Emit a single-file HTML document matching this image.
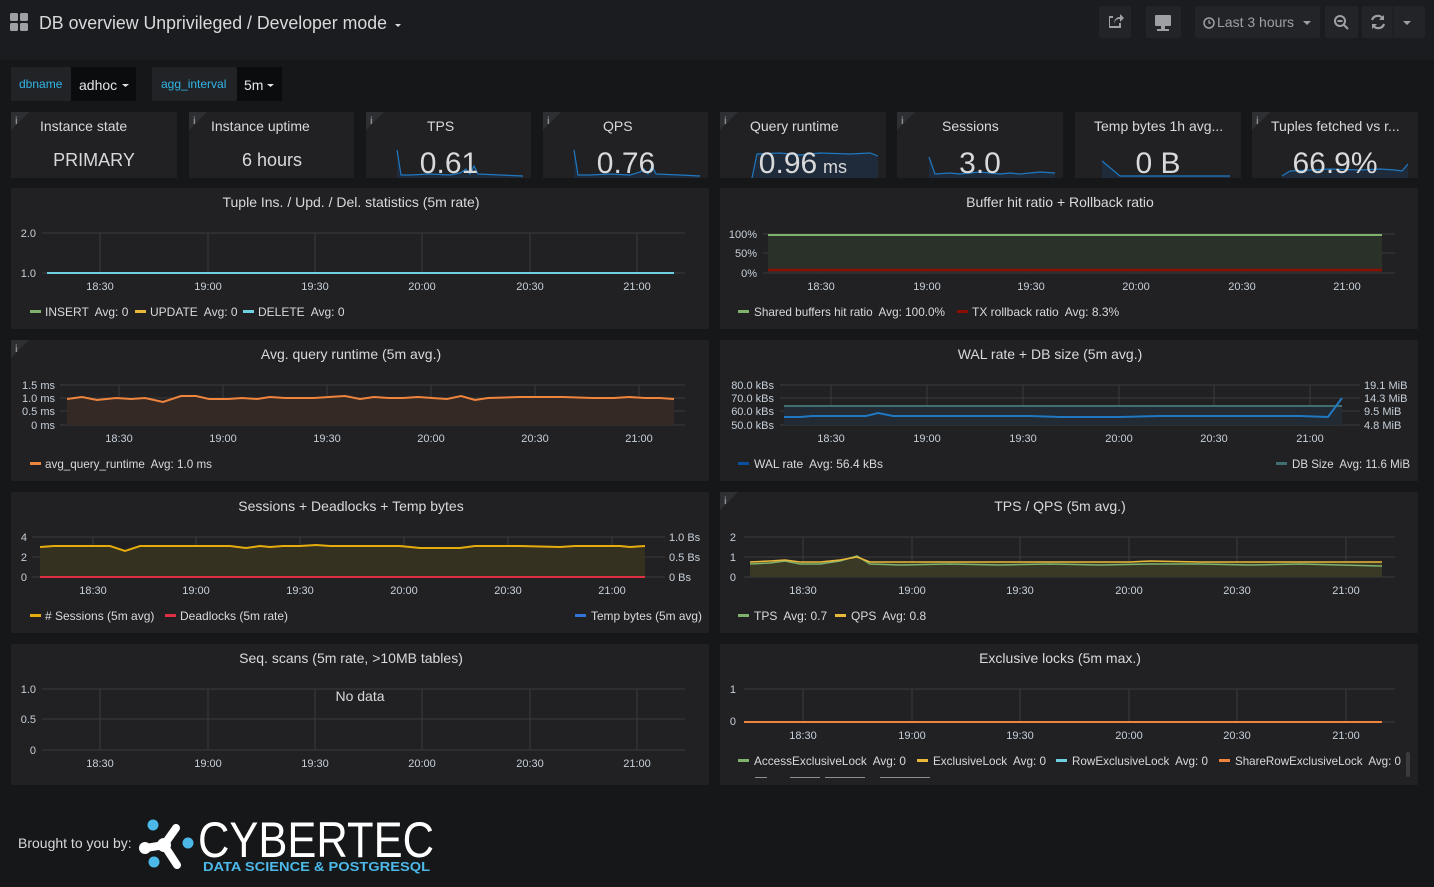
<!DOCTYPE html>
<html><head><meta charset="utf-8"><style>
html,body{margin:0;padding:0;background:#161719;width:1434px;height:887px;overflow:hidden;font-family:"Liberation Sans",sans-serif}
svg text{font-family:"Liberation Sans",sans-serif;white-space:pre}
</style></head><body>
<svg width="1434" height="887" viewBox="0 0 1434 887" xmlns="http://www.w3.org/2000/svg" xml:space="preserve">
<rect width="1434" height="887" fill="#161719"/>
<rect width="1434" height="60" fill="#1b1c1f"/>
<!-- header -->
<g fill="#9fa0a3"><rect x="10" y="13" width="8" height="8" rx="1.5"/><rect x="20" y="13" width="8" height="8" rx="1.5"/><rect x="10" y="23" width="8" height="8" rx="1.5"/><rect x="20" y="23" width="8" height="8" rx="1.5"/></g>
<text x="39" y="29" font-size="18" fill="#d8d9da" textLength="348" lengthAdjust="spacingAndGlyphs">DB overview Unprivileged / Developer mode</text>
<path d="M395 24h6l-3 3z" fill="#d8d9da"/>
<g fill="#232427"><rect x="1099" y="6" width="32" height="32" rx="2"/><rect x="1146" y="6" width="35" height="32" rx="2"/><rect x="1195" y="6" width="125" height="32" rx="2"/><rect x="1325" y="6" width="33" height="32" rx="2"/><rect x="1362" y="6" width="63" height="32" rx="2"/></g>
<line x1="1393" y1="6" x2="1393" y2="38" stroke="#1b1c1f"/>
<path d="M1109 16h4v2h-3v8h9v-3h2v5h-12z M1114 24c0-5 3-7 6-7v-3l4 4-4 4v-3c-3 0-5 1-6 5z" fill="#9fa0a3"/>
<rect x="1155" y="15" width="16" height="11" rx="1" fill="#9fa0a3"/><rect x="1161" y="26" width="4" height="3" fill="#9fa0a3"/><rect x="1157" y="29" width="12" height="2" fill="#9fa0a3"/>
<circle cx="1209" cy="23" r="5" fill="none" stroke="#9fa0a3" stroke-width="1.5"/><path d="M1209 20v3h2" stroke="#9fa0a3" stroke-width="1.3" fill="none"/>
<text x="1217" y="27" font-size="14" fill="#9fa0a3">Last 3 hours</text>
<path d="M1303 21h8l-4 4z" fill="#9fa0a3"/>
<circle cx="1340" cy="21" r="5" fill="none" stroke="#9fa0a3" stroke-width="2"/><path d="M1344 25l4 4M1337.5 21h5" stroke="#9fa0a3" stroke-width="2"/>
<path d="M1372 20a6 6 0 0 1 11-1M1384 24a6 6 0 0 1-11 1" stroke="#9fa0a3" stroke-width="2.2" fill="none"/><path d="M1384 15v5h-5zM1372 29v-5h5z" fill="#9fa0a3"/>
<path d="M1403 21h8l-4 4z" fill="#9fa0a3"/>
<!-- variables -->
<rect x="11" y="67" width="60" height="34" rx="2" fill="#212327"/><rect x="71" y="67" width="65" height="34" fill="#0b0c0e"/>
<text x="19" y="88" font-size="12" fill="#33b5e5">dbname</text><text x="79" y="90" font-size="14" fill="#e5e5e5">adhoc</text><path d="M122 84h7l-3.5 3z" fill="#e5e5e5"/>
<rect x="152" y="67" width="85" height="34" rx="2" fill="#212327"/><rect x="237" y="67" width="45" height="34" fill="#0b0c0e"/>
<text x="161" y="88" font-size="12" fill="#33b5e5">agg_interval</text><text x="244" y="90" font-size="14" fill="#e5e5e5">5m</text><path d="M267 84h7l-3.5 3z" fill="#e5e5e5"/>
<!-- stat panels -->
<g fill="#212124">
<rect x="11" y="112" width="166" height="66"/><rect x="189" y="112" width="165" height="66"/><rect x="366" y="112" width="165" height="66"/><rect x="543" y="112" width="165" height="66"/><rect x="720" y="112" width="166" height="66"/><rect x="897" y="112" width="166" height="66"/><rect x="1075" y="112" width="166" height="66"/><rect x="1252" y="112" width="166" height="66"/>
</g>
<g fill="#2e2f33">
<path d="M11 112h18l-18 18z"/><path d="M189 112h18l-18 18z"/><path d="M366 112h18l-18 18z"/><path d="M543 112h18l-18 18z"/><path d="M720 112h18l-18 18z"/><path d="M897 112h18l-18 18z"/><path d="M1252 112h18l-18 18z"/>
</g>
<g font-size="10" fill="#8e8e8e" font-family="Liberation Serif" font-weight="bold"><text x="15" y="124">i</text><text x="193" y="124">i</text><text x="370" y="124">i</text><text x="547" y="124">i</text><text x="724" y="124">i</text><text x="901" y="124">i</text><text x="1256" y="124">i</text></g>
<g font-size="14" fill="#d8d9da">
<text x="40" y="131">Instance state</text><text x="211" y="131">Instance uptime</text><text x="427" y="131">TPS</text><text x="603" y="131">QPS</text><text x="750" y="131">Query runtime</text><text x="942" y="131">Sessions</text><text x="1094" y="131">Temp bytes 1h avg...</text><text x="1271" y="131">Tuples fetched vs r...</text>
</g>
<!-- sparklines -->
<g fill="#1f2b3a" stroke="none">
<path d="M397 150L401 175L410 175L430 174L450 175L460 173L466 169L470 174L474 166L478 174L500 175L523 176V178H397Z"/>
<path d="M574 150L578 175L590 175L610 174L630 175L640 172L644 169L648 174L652 166L656 174L680 175L700 176V178H574Z"/>
<path d="M752 178L757 154L780 153L800 155L820 153L850 154L870 153L878 156V178H752Z"/>
<path d="M929 157L935 174L950 173L960 174L980 172L1000 174L1010 173L1020 174L1040 172L1055 173V178H929Z"/>
<path d="M1102 161L1120 176L1230 176V178H1102Z"/>
<path d="M1282 176L1290 171L1310 170L1330 169L1360 170L1380 169L1395 170L1402 171L1408 164V178H1282Z"/>
</g>
<g fill="none" stroke="#1f78c1" stroke-width="1.2">
<path d="M397 150L401 175L410 175L430 174L450 175L460 173L466 169L470 174L474 166L478 174L500 175L523 176"/>
<path d="M574 150L578 175L590 175L610 174L630 175L640 172L644 169L648 174L652 166L656 174L680 175L700 176"/>
<path d="M752 178L757 154L780 153L800 155L820 153L850 154L870 153L878 156"/>
<path d="M929 157L935 174L950 173L960 174L980 172L1000 174L1010 173L1020 174L1040 172L1055 173"/>
<path d="M1102 161L1120 176L1230 176"/>
<path d="M1282 176L1290 171L1310 170L1330 169L1360 170L1380 169L1395 170L1402 171L1408 164"/>
</g>
<g fill="#d8d9da" text-anchor="middle">
<text x="94" y="166" font-size="18">PRIMARY</text><text x="272" y="166" font-size="18">6 hours</text>
<text x="449" y="173" font-size="30">0.61</text><text x="626" y="173" font-size="30">0.76</text>
<text x="788" y="173" font-size="30">0.96</text><text x="835" y="173" font-size="18">ms</text>
<text x="980" y="173" font-size="30">3.0</text><text x="1158" y="173" font-size="30">0 B</text><text x="1335" y="173" font-size="30">66.9%</text>
</g>
<!-- big panels -->
<g fill="#212124">
<rect x="11" y="188" width="698" height="141"/><rect x="720" y="188" width="698" height="141"/>
<rect x="11" y="340" width="698" height="141"/><rect x="720" y="340" width="698" height="141"/>
<rect x="11" y="492" width="698" height="141"/><rect x="720" y="492" width="698" height="141"/>
<rect x="11" y="644" width="698" height="141"/><rect x="720" y="644" width="698" height="141"/>
</g>
<g fill="#2e2f33"><path d="M11 340h18l-18 18z"/><path d="M720 492h18l-18 18z"/></g>
<g font-size="10" fill="#8e8e8e" font-family="Liberation Serif" font-weight="bold"><text x="15" y="352">i</text><text x="724" y="504">i</text></g>
<g font-size="14" fill="#d8d9da" text-anchor="middle">
<text x="351" y="207">Tuple Ins. / Upd. / Del. statistics (5m rate)</text>
<text x="1060" y="207">Buffer hit ratio + Rollback ratio</text>
<text x="351" y="359">Avg. query runtime (5m avg.)</text>
<text x="1050" y="359">WAL rate + DB size (5m avg.)</text>
<text x="351" y="511">Sessions + Deadlocks + Temp bytes</text>
<text x="1060" y="511">TPS / QPS (5m avg.)</text>
<text x="351" y="663">Seq. scans (5m rate, &gt;10MB tables)</text>
<text x="1060" y="663">Exclusive locks (5m max.)</text>
</g>
<!-- grids -->
<g stroke="#3a3b3e" stroke-width="1">
<path d="M42 233H685M42 273H685M100 233V273M208 233V273M315 233V273M422 233V273M530 233V273M637 233V273"/>
<path d="M763 234H1395M763 253H1395M763 273H1395M821 234V273M927 234V273M1031 234V273M1136 234V273M1242 234V273M1347 234V273"/>
<path d="M60 385H685M60 398H685M60 411H685M60 425H685M119 385V425M223 385V425M327 385V425M431 385V425M535 385V425M639 385V425"/>
<path d="M780 385H1360M780 398H1360M780 411H1360M780 425H1360M831 385V425M927 385V425M1023 385V425M1119 385V425M1214 385V425M1310 385V425"/>
<path d="M32 537H665M32 557H665M32 577H665M93 537V577M196 537V577M300 537V577M404 537V577M508 537V577M612 537V577"/>
<path d="M744 537H1395M744 557H1395M744 577H1395M803 537V577M912 537V577M1020 537V577M1129 537V577M1237 537V577M1346 537V577"/>
<path d="M42 689H685M42 719H685M42 750H685M100 689V750M208 689V750M315 689V750M422 689V750M530 689V750M637 689V750"/>
<path d="M744 689H1395M744 722H1395M803 689V722M912 689V722M1020 689V722M1129 689V722M1237 689V722M1346 689V722"/>
</g>
<!-- series -->
<line x1="47" y1="273" x2="674" y2="273" stroke="#6ed0e0" stroke-width="2"/>
<rect x="768" y="235" width="614" height="37" fill="#2a3129"/>
<line x1="768" y1="235" x2="1382" y2="235" stroke="#7eb26d" stroke-width="2"/>
<line x1="768" y1="270" x2="1382" y2="270" stroke="#890f02" stroke-width="2.5"/>
<path d="M67 399L82 397L97 400L116 398L131 399L145 398L163 402L181 396L196 396L209 399L228 399L242 398L257 399L270 397L285 398L314 398L329 397L345 396L360 399L374 397L389 398L403 398L418 397L432 398L447 399L461 396L475 400L488 398L520 397L548 397L563 397L592 398L614 398L629 397L645 398L660 398L674 399V425H67Z" fill="#342925"/>
<path d="M67 399L82 397L97 400L116 398L131 399L145 398L163 402L181 396L196 396L209 399L228 399L242 398L257 399L270 397L285 398L314 398L329 397L345 396L360 399L374 397L389 398L403 398L418 397L432 398L447 399L461 396L475 400L488 398L520 397L548 397L563 397L592 398L614 398L629 397L645 398L660 398L674 399" fill="none" stroke="#ef843c" stroke-width="2"/>
<rect x="784" y="406" width="558" height="19" fill="#222a33"/>
<line x1="784" y1="406" x2="1342" y2="406" stroke="#3f6f73" stroke-width="2"/>
<path d="M784 417L800 417L812 416L830 416L850 416L866 416L878 413L893 416L910 416L930 416L950 416L980 416L1000 416L1030 416L1060 417L1120 417L1160 416L1200 416L1250 416L1300 416L1328 417L1342 398" fill="none" stroke="#1f78c1" stroke-width="2"/>
<path d="M40 547L54 546L75 546L97 546L110 546L125 551L140 546L160 546L200 546L230 546L246 548L260 546L270 547L283 546L300 546L316 545L330 546L340 546L400 546L420 548L440 548L460 548L475 546L520 546L560 547L575 546L600 546L620 546L630 547L645 546V577H40Z" fill="#353120"/>
<path d="M40 547L54 546L75 546L97 546L110 546L125 551L140 546L160 546L200 546L230 546L246 548L260 546L270 547L283 546L300 546L316 545L330 546L340 546L400 546L420 548L440 548L460 548L475 546L520 546L560 547L575 546L600 546L620 546L630 547L645 546" fill="none" stroke="#e5ac0e" stroke-width="2"/>
<line x1="40" y1="577" x2="645" y2="577" stroke="#e02f44" stroke-width="2"/>
<path d="M750 562L770 561L785 560L800 562L820 562L840 560L857 557L870 562L900 562L950 562L1000 562L1050 562L1100 562L1130 562L1150 561L1200 562L1250 562L1300 562L1382 562V577H750Z" fill="#3a3926"/>
<path d="M750 564L770 563L785 561L800 564L820 564L840 561L857 556L870 564L900 565L950 564L1000 565L1050 564L1100 565L1150 564L1200 564L1250 565L1300 564L1340 565L1382 566" fill="none" stroke="#7eb26d" stroke-width="1.5"/>
<path d="M750 562L770 561L785 560L800 562L820 562L840 560L857 557L870 562L900 562L950 562L1000 562L1050 562L1100 562L1130 562L1150 561L1200 562L1250 562L1300 562L1382 562" fill="none" stroke="#eab839" stroke-width="1.5"/>
<line x1="744" y1="722" x2="1382" y2="722" stroke="#ef843c" stroke-width="2"/>
<!-- axis labels -->
<g font-size="11" fill="#c7d0d9">
<g text-anchor="end">
<text x="36" y="237">2.0</text><text x="36" y="277">1.0</text>
<text x="757" y="238">100%</text><text x="757" y="257">50%</text><text x="757" y="277">0%</text>
<text x="55" y="389">1.5 ms</text><text x="55" y="402">1.0 ms</text><text x="55" y="415">0.5 ms</text><text x="55" y="429">0 ms</text>
<text x="774" y="389">80.0 kBs</text><text x="774" y="402">70.0 kBs</text><text x="774" y="415">60.0 kBs</text><text x="774" y="429">50.0 kBs</text>
<text x="27" y="541">4</text><text x="27" y="561">2</text><text x="27" y="581">0</text>
<text x="736" y="541">2</text><text x="736" y="561">1</text><text x="736" y="581">0</text>
<text x="36" y="693">1.0</text><text x="36" y="723">0.5</text><text x="36" y="754">0</text>
<text x="736" y="693">1</text><text x="736" y="725">0</text>
</g>
<text x="1364" y="389">19.1 MiB</text><text x="1364" y="402">14.3 MiB</text><text x="1364" y="415">9.5 MiB</text><text x="1364" y="429">4.8 MiB</text>
<text x="669" y="541">1.0 Bs</text><text x="669" y="561">0.5 Bs</text><text x="669" y="581">0 Bs</text>
<g text-anchor="middle">
<text x="100" y="290">18:30</text><text x="208" y="290">19:00</text><text x="315" y="290">19:30</text><text x="422" y="290">20:00</text><text x="530" y="290">20:30</text><text x="637" y="290">21:00</text>
<text x="821" y="290">18:30</text><text x="927" y="290">19:00</text><text x="1031" y="290">19:30</text><text x="1136" y="290">20:00</text><text x="1242" y="290">20:30</text><text x="1347" y="290">21:00</text>
<text x="119" y="442">18:30</text><text x="223" y="442">19:00</text><text x="327" y="442">19:30</text><text x="431" y="442">20:00</text><text x="535" y="442">20:30</text><text x="639" y="442">21:00</text>
<text x="831" y="442">18:30</text><text x="927" y="442">19:00</text><text x="1023" y="442">19:30</text><text x="1119" y="442">20:00</text><text x="1214" y="442">20:30</text><text x="1310" y="442">21:00</text>
<text x="93" y="594">18:30</text><text x="196" y="594">19:00</text><text x="300" y="594">19:30</text><text x="404" y="594">20:00</text><text x="508" y="594">20:30</text><text x="612" y="594">21:00</text>
<text x="803" y="594">18:30</text><text x="912" y="594">19:00</text><text x="1020" y="594">19:30</text><text x="1129" y="594">20:00</text><text x="1237" y="594">20:30</text><text x="1346" y="594">21:00</text>
<text x="100" y="767">18:30</text><text x="208" y="767">19:00</text><text x="315" y="767">19:30</text><text x="422" y="767">20:00</text><text x="530" y="767">20:30</text><text x="637" y="767">21:00</text>
<text x="803" y="739">18:30</text><text x="912" y="739">19:00</text><text x="1020" y="739">19:30</text><text x="1129" y="739">20:00</text><text x="1237" y="739">20:30</text><text x="1346" y="739">21:00</text>
</g>
</g>
<text x="360" y="701" font-size="14" fill="#d8d9da" text-anchor="middle">No data</text>
<!-- legends -->
<g font-size="12" fill="#d8d9da">
<rect x="30" y="310" width="11" height="3" fill="#7eb26d"/><text x="45" y="316">INSERT  Avg: 0</text>
<rect x="135" y="310" width="11" height="3" fill="#eab839"/><text x="150" y="316">UPDATE  Avg: 0</text>
<rect x="243" y="310" width="11" height="3" fill="#6ed0e0"/><text x="258" y="316">DELETE  Avg: 0</text>
<rect x="738" y="310" width="11" height="3" fill="#7eb26d"/><text x="754" y="316" textLength="191" lengthAdjust="spacingAndGlyphs">Shared buffers hit ratio  Avg: 100.0%</text>
<rect x="957" y="310" width="11" height="3" fill="#890f02"/><text x="972" y="316">TX rollback ratio  Avg: 8.3%</text>
<rect x="30" y="462" width="11" height="3" fill="#ef843c"/><text x="45" y="468" textLength="167" lengthAdjust="spacingAndGlyphs">avg_query_runtime  Avg: 1.0 ms</text>
<rect x="738" y="462" width="11" height="3" fill="#0a50a1"/><text x="754" y="468">WAL rate  Avg: 56.4 kBs</text>
<rect x="1276" y="462" width="11" height="3" fill="#3f6f73"/><text x="1292" y="468" textLength="118" lengthAdjust="spacingAndGlyphs">DB Size  Avg: 11.6 MiB</text>
<rect x="30" y="614" width="11" height="3" fill="#e5ac0e"/><text x="45" y="620"># Sessions (5m avg)</text>
<rect x="165" y="614" width="11" height="3" fill="#e02f44"/><text x="180" y="620">Deadlocks (5m rate)</text>
<rect x="575" y="614" width="11" height="3" fill="#3274d9"/><text x="591" y="620" textLength="111" lengthAdjust="spacingAndGlyphs">Temp bytes (5m avg)</text>
<rect x="738" y="614" width="11" height="3" fill="#7eb26d"/><text x="754" y="620">TPS  Avg: 0.7</text>
<rect x="835" y="614" width="11" height="3" fill="#eab839"/><text x="851" y="620">QPS  Avg: 0.8</text>
<rect x="738" y="759" width="11" height="3" fill="#7eb26d"/><text x="754" y="765" textLength="152" lengthAdjust="spacingAndGlyphs">AccessExclusiveLock  Avg: 0</text>
<rect x="917" y="759" width="11" height="3" fill="#eab839"/><text x="933" y="765" textLength="113" lengthAdjust="spacingAndGlyphs">ExclusiveLock  Avg: 0</text>
<rect x="1056" y="759" width="11" height="3" fill="#6ed0e0"/><text x="1072" y="765" textLength="136" lengthAdjust="spacingAndGlyphs">RowExclusiveLock  Avg: 0</text>
<rect x="1219" y="759" width="11" height="3" fill="#ef843c"/><text x="1235" y="765" textLength="166" lengthAdjust="spacingAndGlyphs">ShareRowExclusiveLock  Avg: 0</text>
</g>
<rect x="1406" y="752" width="4" height="25" rx="2" fill="#3a3b3e"/>
<g fill="#8e8e8e"><rect x="755" y="777" width="12" height="1"/><rect x="790" y="777" width="30" height="1"/><rect x="825" y="777" width="40" height="1"/><rect x="880" y="777" width="50" height="1"/></g>
<!-- footer -->
<text x="18" y="848" font-size="14" fill="#d8d9da">Brought to you by:</text>
<g>
<path d="M146 848L164 845L176 828M164 845L177 865" stroke="#fff" stroke-width="8" stroke-linecap="round" stroke-linejoin="round" fill="none"/>
<circle cx="164" cy="845" r="7" fill="#fff"/>
<circle cx="145" cy="848" r="6" fill="#fff"/>
<circle cx="153" cy="825" r="5.5" fill="#4cb8e8"/>
<circle cx="188" cy="843" r="5.5" fill="#4cb8e8"/>
<circle cx="154" cy="862" r="5.5" fill="#4cb8e8"/>
</g>
<text x="198" y="857" font-size="50" fill="#fff" textLength="236" lengthAdjust="spacingAndGlyphs">CYBERTEC</text>
<text x="203" y="871" font-size="13" font-weight="bold" fill="#4cb8e8" textLength="227" lengthAdjust="spacingAndGlyphs">DATA SCIENCE &amp; POSTGRESQL</text>
</svg>
</body></html>
